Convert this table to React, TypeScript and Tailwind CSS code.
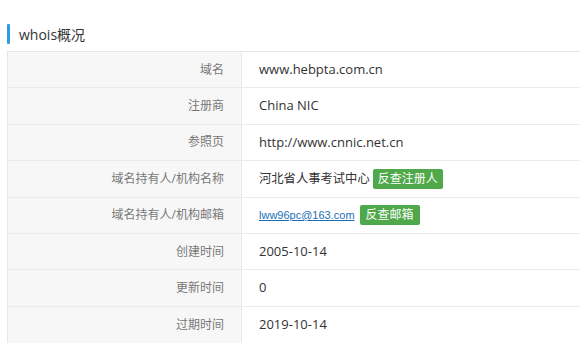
import React from "react";

type Row = {
  label: string;
  value: React.ReactNode;
};

const FONT = { fontFamily: '"Open Sans", "Noto Sans CJK SC", sans-serif' };

const rows: Row[] = [
  { label: "域名", value: "www.hebpta.com.cn" },
  { label: "注册商", value: "China NIC" },
  { label: "参照页", value: "http://www.cnnic.net.cn" },
  {
    label: "域名持有人/机构名称",
    value: (
      <span className="flex items-center">
        <span className="text-[12.3px]">河北省人事考试中心</span>
        <span className="ml-[3px] bg-[#4fa84a] text-white text-[12px] leading-[20px] px-[5px] rounded-[2px]">
          反查注册人
        </span>
      </span>
    ),
  },
  {
    label: "域名持有人/机构邮箱",
    value: (
      <span className="flex items-center">
        <span className="text-[11px] text-[#1c6fb6] underline" style={{ fontFamily: '"Liberation Sans", sans-serif' }}>
          lww96pc@163.com
        </span>
        <span className="ml-[5px] bg-[#4fa84a] text-white text-[12px] leading-[20px] px-[6px] rounded-[2px]">
          反查邮箱
        </span>
      </span>
    ),
  },
  { label: "创建时间", value: "2005-10-14" },
  { label: "更新时间", value: "0" },
  { label: "过期时间", value: "2019-10-14" },
];

export default function App() {
  return (
    <div className="w-[580px] h-[360px] bg-white overflow-hidden" style={FONT}>
      {/* 标题 */}
      <div className="pt-[24px] pl-[7px] flex items-center h-[44px]">
        <span className="w-[3px] h-[20px] bg-[#2c9be0] rounded-[1px]" />
        <span className="ml-[9px] text-[14px] text-[#333]">whois概况</span>
      </div>

      {/* 表格 */}
      <div className="mt-[7px] ml-[7px] border-l border-t border-[#e6e6e6]">
        {rows.map((r, i) => (
          <div
            key={i}
            className={`flex h-[36.4px] ${i < rows.length - 1 ? "border-b border-[#ebebeb]" : ""}`}
          >
            <div className="w-[234px] shrink-0 bg-[#f7f7f7] border-r border-[#ebebeb] flex items-center justify-end pr-[17px] text-[12px] text-[#777]">
              {r.label}
            </div>
            <div className="flex-1 flex items-center pl-[17px] text-[13px] text-[#333]">
              {r.value}
            </div>
          </div>
        ))}
      </div>
    </div>
  );
}
